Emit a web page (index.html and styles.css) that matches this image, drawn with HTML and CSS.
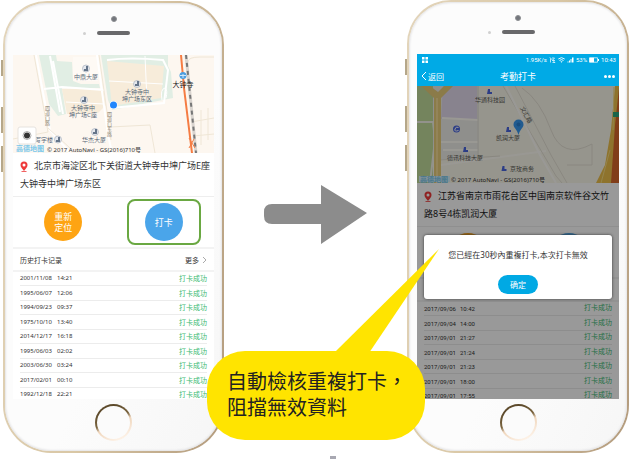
FILE: index.html
```html
<!DOCTYPE html>
<html lang="zh-Hans">
<head>
<meta charset="utf-8">
<meta name="viewport" content="width=device-width, initial-scale=1">
<title>考勤打卡</title>
<link rel="stylesheet" href="styles.css">
</head>
<body>
<main class="scene">
  <section class="phone phone-before">
    <span class="side-key key-mute"></span><span class="side-key key-up"></span><span class="side-key key-down"></span>
    <div class="phone-head">
      <span class="camera"></span>
      <span class="ear"><span class="sensor"></span><span class="speaker"></span></span>
    </div>
    <div class="screen">
      <svg class="map" viewBox="13 55 201 98" preserveAspectRatio="xMidYMid slice">
        <rect x="13" y="55" width="201" height="98" fill="#fdf7f0"/>
        <g fill="#e1eee4">
          <path d="M39 55H56L57 61 72 62 73 81 81 84 99 84 100 88 62 88 66 114 58 116 49 104Z"/>
          <path d="M101 55H168V66L171 72 173 98 112 110 108 100Z"/>
        </g>
        <path d="M73 57H98V81H76Q73 81 73 78Z" fill="#fefaf5"/>
        <g fill="#f7ecda">
          <path d="M62 89 103 89 106 105 98 113 67 114Z"/>
          <path d="M107 61 164 66 161 98 112 106Z"/>
        </g>
        <g fill="none" stroke="#fff" stroke-width="2">
          <path d="M36 55 50 130 70 153M97 55 108 135 112 153M44 89 62 87 104 90M50 56 60 112M107 60Q130 57 163 60L168 70 164 103 111 108M53 61 63 114"/>
          <path d="M145 56 147 101M109 81 163 84M66 102 104 104" stroke-width="1"/>
          <path d="M162 100Q160 89 165 88 168 90 166 98" stroke-width="1"/>
        </g>
        <g fill="none" stroke="#efe6d6" stroke-width="1">
          <path d="M34 55 48 132 13 139M48 128 70 148M99 55 111 140M110 127 150 125 155 153M188 62Q188 57 200 57H214M191 122 214 118M193 136 214 134M201 110V145M208 108V140"/>
        </g>
        <path d="M186 55 196 153" stroke="#d9d4cf" stroke-width="3"/>
        <path d="M186 55 196 153" stroke="#777" stroke-width="2" stroke-dasharray="4 4"/>
        <path d="M181 55 184 88 192 153" fill="none" stroke="#f57c43" stroke-width="2"/>
        <path d="M189 138 195 148M189 148 194 139" stroke="#f57c43" stroke-width="1"/>
        <g fill="#e5e8ee" stroke="#a8b0bd" stroke-width=".7">
          <circle cx="86" cy="68.500" r="3.500"/><circle cx="137" cy="84" r="3.500"/><circle cx="84" cy="100" r="3.500"/><circle cx="95" cy="132" r="3.500"/><circle cx="58" cy="139.500" r="3.500"/>
        </g>
        <path d="M84 71V69H86V66H88V71ZM135 86V84H137V81H139V86ZM82 102V100H84V97H86V102ZM93 134V132H95V129H97V134ZM56 142V140H58V137H60V142Z" fill="#65758a"/>
        <g class="place" fill="#596878">
          <text x="86" y="79">中鼎大厦</text>
          <text x="137" y="94">大钟寺中</text><text x="137" y="101">坤广场东区</text>
          <text x="83" y="110">大钟寺中</text><text x="83" y="117">坤广场C座</text>
          <text x="94" y="142">华杰大厦</text><text x="44" y="142">写字楼</text>
        </g>
        <g class="street" fill="#8a8071">
          <text x="47" y="106">四道口路</text>
          <text x="109" y="112">四道口东路</text>
        </g>
        <circle cx="183" cy="75.500" r="3.500" fill="#4d9ee0"/><path d="M180 75.500H186M183 74V78" stroke="#cfe6fa" stroke-width="1"/>
        <text class="station" x="183" y="87">大钟寺</text>
        <circle cx="113.500" cy="105" r="4" fill="#fff"/><circle cx="113.500" cy="105" r="3.500" fill="#2086fc"/>
        <rect x="18" y="127" width="18" height="17" rx="2" fill="#fff" stroke="#e6e3df" stroke-width="1"/>
        <circle cx="27" cy="135.500" r="3" fill="#333"/><circle cx="27" cy="135.500" r="4" fill="none" stroke="#777" stroke-width=".6"/>
        <text class="brand" x="16" y="151">高德地图</text>
        <text class="credit" x="47" y="151.500">© 2017 AutoNavi - GS(2016)710号</text>
      </svg>
      <div class="address">
        <p><svg class="pin" viewBox="0 0 8 11"><path d="M4 10C2 7.500 .5 6 .5 4a3.500 3.500 0 0 1 7 0C7.500 6 6 7.500 4 10Z" fill="#ee3a3a"/><circle cx="4" cy="4" r="1.500" fill="#fff"/><path d="M1.500 10.500H6.500" stroke="#ee3a3a" stroke-width=".8"/></svg>北京市海淀区北下关街道大钟寺中坤广场E座</p>
        <p>大钟寺中坤广场东区</p>
      </div>
      <div class="actions">
        <div class="action"><button class="round relocate" type="button">重新<br>定位</button></div>
        <div class="action action-marked"><button class="round punch" type="button">打卡</button></div>
      </div>
      <div class="history-head"><h2>历史打卡记录</h2><a href="#more">更多<svg class="chevron" viewBox="0 0 5 8"><path d="M1 1 4 4 1 7"/></svg></a></div>
      <div class="history">
        <table>
          <tr><td class="date">2001/11/08</td><td>14:21</td><td class="ok">打卡成功</td></tr>
          <tr><td class="date">1995/06/07</td><td>12:06</td><td class="ok">打卡成功</td></tr>
          <tr><td class="date">1994/09/23</td><td>09:37</td><td class="ok">打卡成功</td></tr>
          <tr><td class="date">1975/10/10</td><td>13:40</td><td class="ok">打卡成功</td></tr>
          <tr><td class="date">2014/12/17</td><td>16:18</td><td class="ok">打卡成功</td></tr>
          <tr><td class="date">1995/06/03</td><td>02:02</td><td class="ok">打卡成功</td></tr>
          <tr><td class="date">2003/06/30</td><td>03:24</td><td class="ok">打卡成功</td></tr>
          <tr><td class="date">2017/02/01</td><td>00:10</td><td class="ok">打卡成功</td></tr>
          <tr><td class="date">1992/12/18</td><td>22:21</td><td class="ok">打卡成功</td></tr>
        </table>
      </div>
    </div>
    <div class="phone-foot"><span class="home"></span></div>
  </section>

  <div class="between">
    <svg class="arrow" viewBox="0 0 103 59"><path d="M8 19H57V0L103 28 57 59V39H8Q0 39 0 31V27Q0 19 8 19Z"/></svg>
  </div>

  <section class="phone phone-after">
    <span class="side-key key-mute"></span><span class="side-key key-up"></span><span class="side-key key-down"></span>
    <div class="phone-head">
      <span class="camera"></span>
      <span class="ear"><span class="sensor"></span><span class="speaker"></span></span>
    </div>
    <div class="screen">
      <div class="status">
        <svg class="app-mark" viewBox="0 0 6 6"><path d="M0 0H2.500V2.500H0ZM3.500 0H6V2.500H3.500ZM0 3.500H2.500V6H0ZM3.500 3.500H6V6H3.500Z"/></svg>
        <span class="rate">1.95K/s</span>
        <svg class="status-icon" viewBox="0 0 6 6"><path d="M1 1.500V5.500M2.500 1H5L3 3.500H5.500M3 5.500H5.500M.3 .3 5.500 5.700" fill="none" stroke="#fff" stroke-width=".7"/></svg>
        <svg class="status-icon" viewBox="0 0 7 6"><path d="M.3 2Q3.500-.7 6.700 2M1.500 3.500Q3.500 1.700 5.500 3.500" fill="none" stroke="#fff" stroke-width=".9"/><path d="M2.500 4.500Q3.500 3.800 4.500 4.500L3.500 5.800Z" fill="#fff"/></svg>
        <svg class="status-icon" viewBox="0 0 6 6"><path d="M0 5.500H1V4.500H0ZM1.500 5.500H2.500V3.500H1.500ZM3 5.500H4V2H3ZM4.500 5.500H6V.5H4.500Z" fill="#fff"/></svg>
        <span>53%</span>
        <svg class="battery" viewBox="0 0 10 6"><path d="M.5 .8H8.500V5.200H.5Z" fill="none" stroke="#fff" stroke-width=".7"/><path d="M.5 .8H5V5.200H.5ZM9 2H10V4H9Z" fill="#fff"/></svg>
        <span>10:43</span>
      </div>
      <nav class="nav">
        <a href="#back"><svg class="back" viewBox="0 0 6 10"><path d="M5 1 1 5 5 9"/></svg>返回</a>
        <h1>考勤打卡</h1>
        <button class="menu" type="button" aria-label="更多"><svg viewBox="0 0 11 3"><circle cx="1.500" cy="1.500" r="1.500"/><circle cx="5.500" cy="1.500" r="1.500"/><circle cx="9.500" cy="1.500" r="1.500"/></svg></button>
      </nav>
      <div class="page">
        <svg class="map" viewBox="417 86 202 97" preserveAspectRatio="xMidYMid slice">
          <rect x="417" y="86" width="202" height="97" fill="#fbf8eb"/>
          <path d="M417 86H479V160H417Z" fill="#efeee9"/>
          <path d="M417 86H433V183H417Z" fill="#c2dc9b"/>
          <path d="M443 86H477V119H441Z" fill="#e3dbed"/>
          <path d="M417 122 433 122 435 140 430 183" fill="none" stroke="#f4f4e8" stroke-width="2"/>
          <path d="M442 118 478 120M441 142H478M441 165 546 151M443 150H478" fill="none" stroke="#fffdf6" stroke-width="2"/>
          <path d="M503 86 556 176 562 183M515 86 551 155 567 183M478 86V160M522 88Q540 100 551 130T592 144V165H567M440 160 500 156" fill="none" stroke="#e5e2d6" stroke-width="1"/>
          <path d="M506 86 540 155 556 183" fill="none" stroke="#fffef9" stroke-width="2"/>
          <path d="M421 86 434 98V183H441V98L453 86H444L438 92 430 86Z" fill="#e8cd7a"/>
          <path d="M437 98V183" stroke="#f6dc94" stroke-width="2"/>
          <path d="M615 86 611 130 605 165 596 183H619V86Z" fill="#edc04c"/>
          <path d="M619 88 615 125 611 183H619Z" fill="#d7672a"/>
          <path d="M614 87 613 130M610 150 601 183" stroke="#f7dc82" stroke-width="1"/>
          <rect x="613" y="112" width="6" height="5" fill="#2ca77c"/>
          <g fill="#4a66e0"><path d="M488 89H490V92H492V94H487ZM507 127H509V130H511V132H506ZM464 147H466V150H468V152H463ZM502.500 166H504.500V169H506.500V171H501.500Z"/><circle cx="456.500" cy="129" r="3.500"/></g>
          <path d="M458.500 127.500Q456 126 455 129T458.500 130.500" fill="none" stroke="#fff" stroke-width="1"/>
          <g class="place" fill="#5c5c56">
            <text x="490" y="102">华通科技园</text><text x="508" y="140">凯润大厦</text><text x="465" y="160">德讯科技大厦</text><text x="522" y="170.500">京玫商务</text>
            <g transform="rotate(62 526 115)"><text x="526" y="117">文汇路</text></g>
          </g>
          <path d="M518.500 135C517 129 513.500 128 513.500 124.500a5 5 0 0 1 10 0C523.500 128 520 129 518.500 135Z" fill="#3798f0"/><circle cx="518.500" cy="124.500" r="2" fill="#2b7fd0"/>
          <rect x="419" y="176" width="31" height="6" fill="#d8f3ff"/>
          <text class="brand" x="420" y="181.500">高德地图</text>
          <text class="credit" x="451" y="181.500">© 2017 AutoNavi - GS(2016)710号</text>
        </svg>
        <div class="address">
          <p><svg class="pin" viewBox="0 0 8 11"><path d="M4 10C2 7.500 .5 6 .5 4a3.500 3.500 0 0 1 7 0C7.500 6 6 7.500 4 10Z" fill="#ee3a3a"/><circle cx="4" cy="4" r="1.500" fill="#fff"/><path d="M1.500 10.500H6.500" stroke="#ee3a3a" stroke-width=".8"/></svg>江苏省南京市雨花台区中国南京软件谷文竹</p>
          <p>路8号4栋凯润大厦</p>
        </div>
        <div class="actions">
          <div class="action"><span class="round relocate"></span></div>
          <div class="action"><span class="round punch"></span></div>
        </div>
        <div class="history-head"></div>
        <div class="history">
          <table>
            <tr><td class="date">2017/09/06</td><td>10:42</td><td class="ok">打卡成功</td></tr>
            <tr><td class="date">2017/09/04</td><td>14:00</td><td class="ok">打卡成功</td></tr>
            <tr><td class="date">2017/09/01</td><td>21:27</td><td class="ok">打卡成功</td></tr>
            <tr><td class="date">2017/09/01</td><td>21:24</td><td class="ok">打卡成功</td></tr>
            <tr><td class="date">2017/09/01</td><td>21:23</td><td class="ok">打卡成功</td></tr>
            <tr><td class="date">2017/09/01</td><td>18:00</td><td class="ok">打卡成功</td></tr>
            <tr><td class="date">2017/09/01</td><td>17:55</td><td class="ok">打卡成功</td></tr>
          </table>
        </div>
        <div class="backdrop">
          <div class="modal" role="dialog" lang="zh-Hant">
            <p>您已經在30秒內重複打卡,本次打卡無效</p>
            <button type="button">确定</button>
          </div>
        </div>
      </div>
    </div>
    <div class="phone-foot"><span class="home"></span></div>
  </section>

  <aside class="callout" lang="zh-Hant">
    <svg class="tail" viewBox="0 0 103 104"><path d="M103 0 0 102V104H33Z"/></svg>
    <p>自動檢核重複打卡，<br>阻擋無效資料</p>
  </aside>
  <span class="tick"></span>
</main>
</body>
</html>
```
FILE: styles.css
```css
* { box-sizing: border-box; }

body {
  margin: 0;
  background: #fff;
  color: #333;
  font-family: "Noto Sans", "Noto Sans CJK SC", sans-serif;
}

h1, h2, p { margin: 0; font-weight: 400; }
a { color: inherit; text-decoration: none; }
button { border: 0; padding: 0; font-family: inherit; color: #fff; }
svg { display: block; }

.scene {
  position: relative;
  display: grid;
  grid-template-columns: 221fr 183fr 222fr;
  align-items: start;
  min-height: 100vh;
  padding: 0 1px 0 3px;
  overflow: hidden;
}

/* Handset */
.phone {
  position: relative;
  min-width: 0;
  padding: 0 8px;
  border: 2px solid transparent;
  border-radius: 44px 44px 48px 48px;
  background:
    linear-gradient(115deg, #fcfcfc 60%, #f6f6f6) padding-box,
    linear-gradient(100deg, #e3d5bb, #d9c7a5 50%, #b29a7c) border-box;
  box-shadow: inset 0 0 2px 1px #e4e4e6;
}
.phone-before { margin-top: 1px; }

.side-key {
  position: absolute;
  left: -4px;
  width: 2px;
  background: #b5a78a;
}
.key-mute { top: 57px; height: 16px; }
.key-up { top: 104px; height: 26px; }
.key-down { top: 143px; height: 26px; }

.phone-head {
  display: flex;
  flex-direction: column;
  align-items: center;
  gap: 9px;
  height: 52px;
  padding-top: 13px;
}
.camera {
  width: 6px;
  height: 6px;
  border: 1px solid #8d8f93;
  border-radius: 50%;
  background: #73767c;
}
.ear { display: flex; align-items: center; gap: 11px; padding-right: 14px; }
.sensor { width: 3px; height: 3px; border-radius: 50%; background: #d0d0d0; }
.speaker { width: 33px; height: 4px; border-radius: 2px; background: #69696b; }

.phone-foot {
  display: flex;
  justify-content: center;
  height: 52px;
  padding-top: 5px;
}
.home {
  width: 37px;
  height: 37px;
  border: 2px solid transparent;
  border-radius: 50%;
  background:
    linear-gradient(#fbfbfb, #fbfbfb) padding-box,
    linear-gradient(155deg, #5d4a2b 20%, #7b6540 45%, #efd6bd 55%, #fff5eb 90%) border-box;
}

/* Attendance screen */
.screen { background: #fff; overflow: hidden; }
.map { width: 100%; height: auto; }
.place { font-size: 6px; text-anchor: middle; }
.street { font-size: 5px; writing-mode: vertical-rl; }
.station { font-size: 7px; text-anchor: middle; fill: #222; }
.brand { font-size: 7px; font-weight: 700; fill: #7cc8ea; }
.credit { font-size: 6px; fill: #333; }

.address {
  height: 44px;
  padding: 4px 7px 0;
  border-bottom: 1px solid #eee;
  font-size: 9px;
  line-height: 18px;
  white-space: nowrap;
}
.address p { display: flex; align-items: center; }
.pin { flex: none; width: 8px; height: 11px; margin-right: 6px; }

.actions {
  display: grid;
  grid-template-columns: 1fr 1fr;
  place-items: center;
  height: 50px;
}
.action {
  display: grid;
  place-items: center;
  width: 74px;
  height: 46px;
}
.action-marked { border: 2px solid #6aa842; border-radius: 8px; }
.round {
  width: 38px;
  height: 38px;
  border-radius: 50%;
  font-size: 9px;
  line-height: 11px;
}
.relocate { background: #fea413; }
.punch { background: #4aa5ea; }

.history-head {
  display: flex;
  align-items: center;
  justify-content: space-between;
  height: 25px;
  padding: 0 7px;
  border: solid #f3f3f3;
  border-width: 2px 0;
  font-size: 7px;
}
.history-head h2 { font-size: 7px; }
.history-head a { display: flex; align-items: center; gap: 3px; }
.chevron { width: 5px; height: 8px; fill: none; stroke: #aaa; stroke-width: 1; }

.history { max-height: 127px; padding: 0 7px; overflow: hidden; }
.history table { width: 100%; border-spacing: 0; }
.history td {
  height: 14px;
  padding: 0;
  border-bottom: 1px solid #ececec;
  font-size: 6px;
  line-height: 13px;
}
.history tr:nth-child(even) td { height: 15px; }
.history .date { width: 37px; }
.history .ok {
  color: #3dba72;
  font-size: 7px;
  text-align: right;
}

/* Attendance screen with the duplicate-punch dialog */
.status, .nav { background: #00aae6; color: #fff; }
.status {
  display: flex;
  align-items: center;
  gap: 2px;
  height: 12px;
  padding: 0 3px 0 5px;
  font: 6px/12px Roboto, sans-serif;
}
.app-mark { width: 6px; height: 6px; fill: #fff; }
.rate { margin-left: auto; }
.status-icon { width: 7px; height: 6px; }
.battery { width: 10px; height: 6px; }
.nav {
  display: grid;
  grid-template-columns: 1fr auto 1fr;
  align-items: center;
  height: 20px;
  padding: 0 4px;
}
.nav a { display: flex; align-items: center; gap: 1px; font-size: 8px; }
.nav h1 { font-size: 9px; }
.back { width: 6px; height: 10px; fill: none; stroke: #fff; stroke-width: 1; }
.menu { justify-self: end; width: 11px; background: none; }
.menu svg { fill: #fff; }

.page { position: relative; }
.phone-after .address { color: #222; }
.phone-after .history { max-height: 97px; font-family: Roboto, "Noto Sans CJK SC", sans-serif; }
.phone-after .date { width: 36px; }
.backdrop {
  position: absolute;
  inset: 0;
  padding: 149px 7px 0;
  background: rgba(0, 0, 0, 0.4);
}
.modal {
  display: flex;
  flex-direction: column;
  align-items: center;
  gap: 14px;
  padding: 14px 0 5px;
  border-radius: 3px;
  background: #fff;
  box-shadow: 0 0 3px #333;
  font-size: 8px;
  line-height: 12px;
  white-space: nowrap;
}
.modal button {
  width: 40px;
  height: 19px;
  border-radius: 10px;
  background: #00a9e4;
  font-size: 8px;
}

/* Between the handsets */
.between { display: flex; justify-content: center; padding-top: 185px; }
.arrow { width: 103px; fill: #8c8c8c; }

.callout {
  position: absolute;
  top: 351px;
  left: 50%;
  width: 218px;
  margin-left: -108px;
  padding: 17px 0 20px 20px;
  border-radius: 38px;
  background: #ffe400;
  color: #222;
  font-family: "Noto Sans CJK TC", sans-serif;
  font-size: 20px;
  font-weight: 300;
  line-height: 26px;
  white-space: nowrap;
}
.tail {
  position: absolute;
  bottom: calc(100% - 2px);
  left: 129px;
  width: 103px;
  fill: #ffe400;
}
.tick {
  position: absolute;
  bottom: 0;
  left: 50%;
  width: 6px;
  height: 3px;
  margin-left: 15px;
  background: #a8a8b2;
}
```
